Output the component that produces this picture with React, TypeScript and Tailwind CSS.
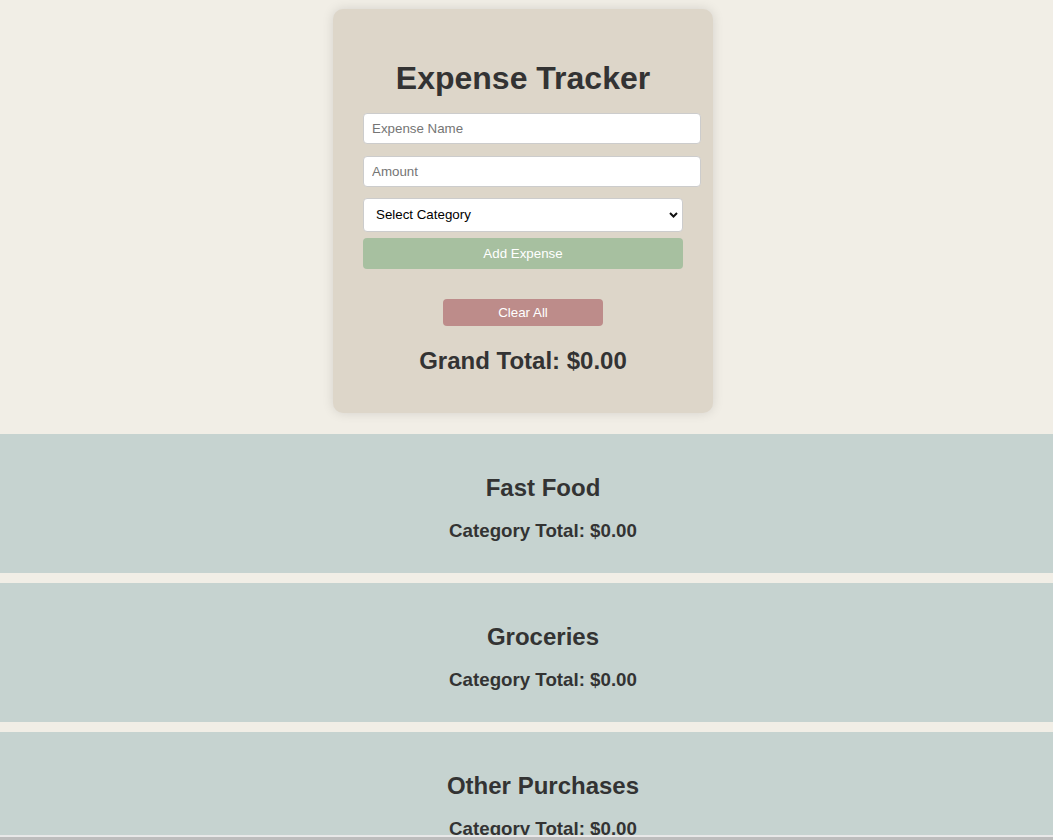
const categories = ["Fast Food", "Groceries", "Other Purchases"];

const ExpenseForm = () => {
  return (
    <div className="flex justify-center pr-[7px]">
      <div className="w-[380px] rounded-[10px] bg-[#ddd6c9] px-[30px] pb-[38px] pt-[51px] shadow-[0_0_12px_rgba(0,0,0,0.12)]">
        <h1 className="mb-[16px] text-center text-[32px] font-bold leading-[37px] text-[#333]">
          Expense Tracker
        </h1>
        <input
          type="text"
          placeholder="Expense Name"
          className="block h-[31px] w-[338px] max-w-none rounded-[4px] border border-[#ccc] bg-white px-[8px] text-[13.33px] text-black outline-none placeholder:text-[#757575]"
        />
        <input
          type="text"
          placeholder="Amount"
          className="mt-[12px] block h-[31px] w-[338px] max-w-none rounded-[4px] border border-[#ccc] bg-white px-[8px] text-[13.33px] text-black outline-none placeholder:text-[#757575]"
        />
        <div className="relative mt-[11px] w-[320px]">
          <select className="block h-[34px] w-full appearance-none rounded-[4px] border border-[#ccc] bg-white pl-[12px] text-[13.33px] text-black outline-none">
            <option>Select Category</option>
            <option>Fast Food</option>
            <option>Groceries</option>
            <option>Other Purchases</option>
          </select>
          <svg
            className="pointer-events-none absolute right-[5px] top-[14px]"
            width="9"
            height="6"
            viewBox="0 0 9 6"
            fill="none"
          >
            <path d="M1 1l3.5 3.5L8 1" stroke="#111" strokeWidth="2" />
          </svg>
        </div>
        <button className="mt-[6px] block h-[31px] w-[320px] rounded-[4px] bg-[#a7c0a0] text-[13.33px] text-white">
          Add Expense
        </button>
        <div className="mt-[30px] flex justify-center">
          <button className="h-[27px] w-[160px] rounded-[4px] bg-[#bd8c8a] text-[13.33px] text-white">
            Clear All
          </button>
        </div>
        <h2 className="mt-[21px] text-center text-[24px] font-bold leading-[28px] text-[#333]">
          Grand Total: $0.00
        </h2>
      </div>
    </div>
  );
};

const CategorySection = ({ name }: { name: string }) => {
  return (
    <section className="flex h-[139px] flex-col items-center bg-[#c6d3d0] pl-[33px] pt-[40px] text-[#333]">
      <h2 className="text-[24px] font-bold leading-[28px]">{name}</h2>
      <h3 className="mt-[18px] text-[18.72px] font-bold leading-[21px]">
        Category Total: $0.00
      </h3>
    </section>
  );
};

export default function App() {
  return (
    <div className="h-[840px] overflow-hidden bg-[#f1eee6] pt-[9px] font-['Liberation_Sans',Arial,sans-serif]">
      <ExpenseForm />
      <div className="mt-[21px] flex flex-col gap-[10px]">
        {categories.map((c) => (
          <CategorySection key={c} name={c} />
        ))}
      </div>
      {/* scrollbar edge peeking in at the bottom */}
      <div className="fixed inset-x-0 bottom-0 h-[5px] border-t-2 border-[#e8e8e8] bg-[#bdbdbd]" />
    </div>
  );
}
